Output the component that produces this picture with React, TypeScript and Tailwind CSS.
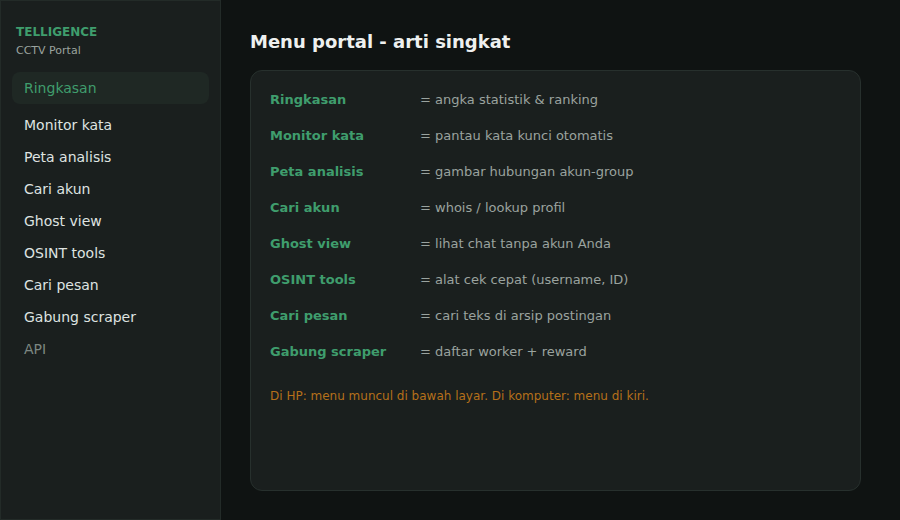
import React from "react";

const nav = [
  "Monitor kata",
  "Peta analisis",
  "Cari akun",
  "Ghost view",
  "OSINT tools",
  "Cari pesan",
  "Gabung scraper",
];

const rows: [string, string][] = [
  ["Ringkasan", "= angka statistik & ranking"],
  ["Monitor kata", "= pantau kata kunci otomatis"],
  ["Peta analisis", "= gambar hubungan akun-group"],
  ["Cari akun", "= whois / lookup profil"],
  ["Ghost view", "= lihat chat tanpa akun Anda"],
  ["OSINT tools", "= alat cek cepat (username, ID)"],
  ["Cari pesan", "= cari teks di arsip postingan"],
  ["Gabung scraper", "= daftar worker + reward"],
];

export default function App() {
  return (
    <div
      className="flex h-[520px] w-[900px] bg-[#0f1312] overflow-hidden"
      style={{ fontFamily: '"DejaVu Sans", sans-serif' }}
    >
      <aside className="flex w-[221px] shrink-0 flex-col border border-[#232b28] bg-[#1a1f1e]">
        <div className="px-[15px] pt-[23px]">
          <div className="text-[12px] font-bold leading-4 text-[#3f9d6d]">TELLIGENCE</div>
          <div className="mt-[3px] text-[11px] leading-4 text-[#9aa39f]">CCTV Portal</div>
        </div>
        <nav className="mt-[13px] flex flex-col px-[11px]">
          <div className="mb-[5px] flex h-8 items-center rounded-lg bg-[#1f2824] px-3 text-sm text-[#3f9d6d]">
            Ringkasan
          </div>
          {nav.map((n) => (
            <div key={n} className="flex h-8 items-center px-3 text-sm text-[#dfe3e1]">
              {n}
            </div>
          ))}
          <div className="flex h-8 items-center px-3 text-sm text-[#7d8782]">API</div>
        </nav>
      </aside>
      <main className="flex-1 pl-[29px] pr-[39px] pt-[28px]">
        <h1 className="text-[18px] font-bold leading-7 text-[#eef0ef]">Menu portal - arti singkat</h1>
        <section className="mt-[14px] h-[421px] rounded-xl border border-[#27302d] bg-[#1a1f1e] px-[19px] pt-[19px]">
          <div className="grid grid-cols-[150px_1fr] gap-y-4">
            {rows.map(([k, v]) => (
              <React.Fragment key={k}>
                <div className="text-[13px] font-bold leading-5 text-[#3f9d6d]">{k}</div>
                <div className="text-[13px] leading-5 text-[#9aa39f]">{v}</div>
              </React.Fragment>
            ))}
          </div>
          <p className="mt-[26px] text-[12px] leading-4 text-[#b5701a]">
            Di HP: menu muncul di bawah layar. Di komputer: menu di kiri.
          </p>
        </section>
      </main>
    </div>
  );
}
